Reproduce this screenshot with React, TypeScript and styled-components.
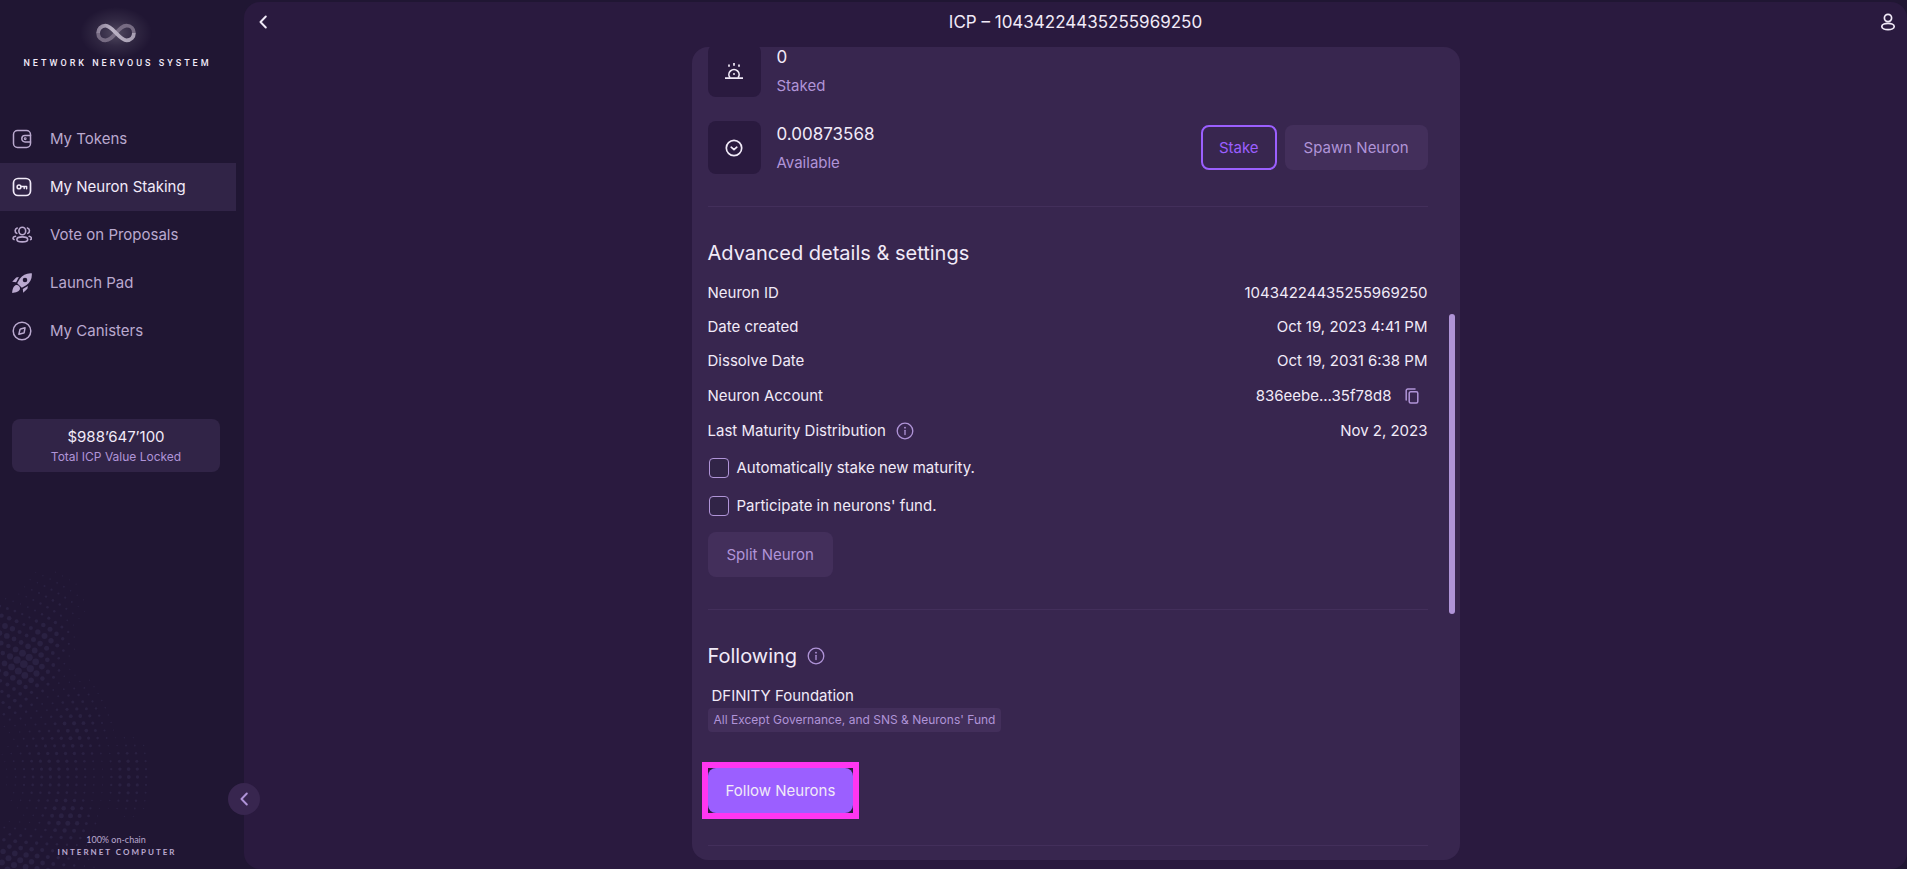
import React from "react";
import styled, { createGlobalStyle, css } from "styled-components";

const color = {
  page: "#201633",
  main: "#2a1a3f",
  card: "#38264f",
  raised: "#312447",
  control: "#432f5b",
  primary: "#9b5fff",
  lilac: "#b094d8",
  menu: "#baa9cf",
  text: "#f1eaf8",
  dots: "#2a2142",
};

const GlobalStyle = createGlobalStyle`
  *, *::before, *::after { box-sizing: border-box; }
  body {
    margin: 0;
    background: ${color.page};
    color: ${color.text};
    font-family: Inter, "Liberation Sans", sans-serif;
    font-size: 15px;
    line-height: 24px;
  }
  h1, h2, p, ul, dl, dd { margin: 0; padding: 0; font-weight: 400; }
  ul { list-style: none; }
  button { font: inherit; cursor: pointer; border: 0; padding: 0; }
  svg { display: block; }
`;

/* Shell */

const Shell = styled.div`
  display: grid;
  grid-template-columns: 244px minmax(0, 1fr);
  height: 100vh;
  overflow: hidden;
`;

const Sidebar = styled.aside`
  position: relative;
  display: flex;
  flex-direction: column;
  min-height: 0;
  padding-right: 8px;
`;

const Backdrop = styled.svg`
  position: absolute;
  left: 0;
  bottom: 0;
`;

const Brand = styled.div`
  display: flex;
  flex-direction: column;
  align-items: center;
  gap: 4px;
  padding: 12px 4px 46px 0;
`;

const BrandName = styled.p`
  font-family: Roboto, sans-serif;
  font-size: 9px;
  font-weight: 500;
  line-height: 12px;
  letter-spacing: 3px;
  margin-right: -3px;
  text-transform: uppercase;
`;

const MenuItem = styled.a<{ $active?: boolean }>`
  display: flex;
  align-items: center;
  gap: 18px;
  height: 48px;
  padding-left: 12px;
  color: ${color.menu};
  text-decoration: none;
  ${(p) =>
    p.$active &&
    css`
      background: ${color.raised};
      color: ${color.text};
    `}
`;

const ValueLocked = styled.div`
  margin: 64px 16px 0 12px;
  padding: 6px 8px 7px;
  border-radius: 8px;
  background: ${color.raised};
  text-align: center;
`;

const LockedLabel = styled.p`
  color: ${color.lilac};
  font-size: 12px;
  line-height: 16px;
`;

const OnChain = styled.a`
  position: relative;
  display: block;
  margin-top: auto;
  padding: 0 4px 11px 0;
  color: ${color.menu};
  font-family: Lato, sans-serif;
  font-size: 9px;
  line-height: 12px;
  text-align: center;
  text-decoration: none;
`;

const OnChainName = styled.strong`
  display: block;
  margin-right: -2px;
  font-size: 8px;
  font-weight: 700;
  letter-spacing: 2px;
  text-transform: uppercase;
`;

const CollapseButton = styled.button`
  position: absolute;
  z-index: 1;
  right: -16px;
  bottom: 54px;
  display: grid;
  place-items: center;
  width: 32px;
  height: 32px;
  border-radius: 50%;
  background: ${color.card};
  color: ${color.lilac};
`;

/* Main */

const Main = styled.main`
  display: flex;
  flex-direction: column;
  min-height: 0;
  margin-top: 2px;
  padding-bottom: 9px;
  border-radius: 16px;
  background: ${color.main};
`;

const Header = styled.header`
  display: grid;
  grid-template-columns: 32px 1fr 32px;
  align-items: center;
  height: 45px;
  padding: 0 3px 5px;
`;

const Title = styled.h1`
  font-size: 17px;
  text-align: center;
`;

const IconButton = styled.button`
  display: grid;
  place-items: center;
  width: 32px;
  height: 24px;
  background: none;
  color: inherit;
`;

const Card = styled.section`
  position: relative;
  flex: 1;
  min-height: 0;
  width: 768px;
  max-width: 100%;
  margin: 0 auto;
  padding: 0 32px 0 16px;
  border-radius: 16px;
  background: ${color.card};
  overflow: hidden;
`;

const ScrollThumb = styled.span`
  position: absolute;
  top: 267px;
  right: 5px;
  width: 6px;
  height: 300px;
  border-radius: 3px;
  background: ${color.lilac};
`;

const Section = styled.section<{ $scrolled?: boolean }>`
  margin-top: ${(p) => (p.$scrolled ? "-3px" : "32px")};
  padding-bottom: 32px;
  border-bottom: 1px solid ${color.control};
`;

const SectionTitle = styled.h2`
  display: flex;
  align-items: center;
  gap: 10px;
  margin-bottom: 14px;
  font-size: 20px;
  line-height: 28px;
`;

const Stats = styled.div`
  display: flex;
  flex-direction: column;
  gap: 24px;
`;

const Stat = styled.div`
  display: flex;
  align-items: flex-start;
  gap: 16px;
  height: 53px;
`;

const StatIcon = styled.span`
  display: grid;
  place-items: center;
  width: 53px;
  height: 53px;
  border-radius: 8px;
  background: ${color.main};
`;

const StatText = styled.div`
  flex: 1;
`;

const StatValue = styled.p`
  margin-bottom: 4px;
  font-size: 17px;
  line-height: 26px;
`;

const StatLabel = styled.p`
  color: ${color.lilac};
`;

const StatActions = styled.div`
  display: flex;
  gap: 8px;
  align-self: center;
`;

const Button = styled.button<{ $kind: "primary" | "outline" | "secondary" }>`
  height: 45px;
  border-radius: 8px;
  ${(p) =>
    ({
      primary: css`
        padding: 0 18px;
        background: ${color.primary};
        color: ${color.text};
      `,
      outline: css`
        padding: 0 16px;
        border: 2px solid ${color.primary};
        background: none;
        color: ${color.primary};
      `,
      secondary: css`
        padding: 0 19px;
        background: ${color.control};
        color: ${color.lilac};
      `,
    })[p.$kind]}
`;

const Details = styled.dl`
  display: flex;
  flex-direction: column;
  gap: 10px;
`;

const Detail = styled.div`
  display: flex;
  justify-content: space-between;
`;

const DetailName = styled.dt`
  display: flex;
  align-items: center;
  gap: 10px;
`;

const DetailValue = styled.dd`
  display: flex;
  align-items: center;
  gap: 4px;
`;

const CopyButton = styled(IconButton)`
  height: 26px;
  color: ${color.lilac};
`;

const InfoButton = styled(IconButton)`
  width: 18px;
  height: 20px;
  color: ${color.lilac};
`;

const Options = styled.div`
  display: flex;
  flex-direction: column;
  gap: 10px;
  margin: 11px 0 12px;
`;

const Option = styled.label`
  display: flex;
  align-items: center;
  gap: 8px;
  height: 28px;
  padding-left: 1px;
`;

const Checkbox = styled.input`
  appearance: none;
  width: 20px;
  height: 20px;
  margin: 0;
  border: 1px solid ${color.lilac};
  border-radius: 4px;
  background: ${color.raised};
  &:checked {
    background: ${color.primary};
  }
`;

const Followee = styled.p`
  padding-left: 4px;
`;

const Topic = styled.span`
  display: inline-block;
  padding: 0 6px;
  border-radius: 4px;
  background: ${color.control};
  color: ${color.lilac};
  font-size: 12px;
`;

const Topics = styled.div`
  display: flex;
`;

const Highlight = styled.div`
  width: fit-content;
  margin: 30px -6px -6px;
  border: 6px solid #ff36f1;
  background: #2c1a3e;
`;

/* Icons */

const stroke = {
  fill: "none",
  stroke: "currentColor",
  strokeWidth: 1.5,
  strokeLinecap: "round" as const,
  strokeLinejoin: "round" as const,
  "aria-hidden": true,
};

const WalletIcon = () => (
  <svg width="20" height="20" viewBox="0 0 20 20" {...stroke}>
    <rect x="1.5" y="1.5" width="17" height="17" rx="4" />
    <path d="M18.5 6.5h-5.500a3.200 3.200 0 0 0 0 6.400h5.500" />
    <circle cx="13.200" cy="9.700" r="0.900" strokeWidth="1.100" />
  </svg>
);

const KeyIcon = () => (
  <svg width="20" height="20" viewBox="0 0 20 20" {...stroke} strokeWidth={1.7}>
    <rect x="1.500" y="1.500" width="17" height="17" rx="4.500" />
    <circle cx="7" cy="9.900" r="1.900" strokeWidth="1.500" />
    <path d="M9 9.600h5.600v2.200M12.200 9.800v1.600" strokeWidth="1.500" />
  </svg>
);

const VoteIcon = () => (
  <svg width="20" height="20" viewBox="0 0 20 20" {...stroke} strokeWidth={1.6}>
    <ellipse cx="10.300" cy="6" rx="3.400" ry="3.700" />
    <ellipse cx="10.300" cy="14.400" rx="5.400" ry="2.500" />
    <path d="M5.200 3a2.900 2.900 0 0 0-.4 5.400M15.400 3a2.900 2.900 0 0 1 .4 5.400" />
    <path d="M3.400 11.300C2 11.700 1 12.400 1 13.300c0 .6.400 1.100 1 1.300M17.200 11.300c1.400.4 2.300 1.100 2.300 2 0 .6-.3 1.100-.9 1.300" />
  </svg>
);

const RocketIcon = () => (
  <svg width="20" height="20" viewBox="0 0 20 20" fill="currentColor" aria-hidden>
    <path
      fillRule="evenodd"
      d="M19.800.2C14.600-.2 10.600 1.900 7.800 5.800L5.200 10.200l4.600 4.600 4.400-2.600C18.300 9.400 20.300 5.400 19.800.2ZM13 4.700a2.300 2.300 0 1 1 0 4.600 2.300 2.300 0 0 1 0-4.600Z"
    />
    <path d="M6.900 4.100 4.200 4.600.2 8.800l3.900.4 2.800-5.100ZM15.900 13.100l-.5 2.700-4.200 4-.4-3.900 5.100-2.800Z" />
    <path d="M4.300 12c1.900-.3 4 1.700 3.700 3.700-.4 2.700-4.200 4-7.800 4.200C.3 16.300 1.600 12.400 4.300 12Z" />
  </svg>
);

const CompassIcon = () => (
  <svg width="20" height="20" viewBox="0 0 20 20" {...stroke}>
    <circle cx="10" cy="10" r="8.800" />
    <path d="M13 6.800 12.200 11.400c-.1.300-.3.500-.6.600L6.900 13.200l1.100-4.700c.1-.3.300-.5.600-.6L13 6.800Z" />
  </svg>
);

const ChevronLeft = () => (
  <svg width="8" height="14" viewBox="0 0 8 14" {...stroke} strokeWidth={1.9}>
    <path d="M6.800 1.500 1.500 7l5.300 5.500" />
  </svg>
);

const UserIcon = () => (
  <svg width="16" height="18" viewBox="0 0 16 18" {...stroke} strokeWidth={1.7}>
    <circle cx="8" cy="5" r="3.600" />
    <ellipse cx="8" cy="13.500" rx="6.200" ry="3.200" />
  </svg>
);

const StakedIcon = () => (
  <svg width="18" height="18" viewBox="0 0 18 18" {...stroke} strokeLinecap="butt">
    <path d="M0 16.200h18" strokeWidth="1.800" />
    <path d="M5 15.800a5.100 5.100 0 1 1 8 0" strokeWidth="1.700" />
    <path d="M9 1v2.800M4 2.500v2.200M14 2.500v2.200" strokeWidth="1.700" />
    <circle cx="9" cy="12" r="1" fill="currentColor" stroke="none" />
  </svg>
);

const AvailableIcon = () => (
  <svg width="18" height="18" viewBox="0 0 18 18" {...stroke} strokeWidth={1.7}>
    <circle cx="9" cy="9" r="7.700" />
    <path d="M6.200 8.200 9 10.700l2.800-2.500" />
  </svg>
);

const InfoIcon = () => (
  <svg width="18" height="18" viewBox="0 0 18 18" {...stroke} strokeWidth={1.3}>
    <circle cx="9" cy="9" r="7.800" />
    <path d="M9 8.300v4.200" />
    <circle cx="9" cy="5.700" r=".9" fill="currentColor" stroke="none" />
  </svg>
);

const CopyIcon = () => (
  <svg width="14" height="16" viewBox="0 0 14 16" {...stroke}>
    <rect x="4.200" y="3.800" width="8.600" height="11.200" rx="1.500" />
    <path d="M1.200 12V2.600c0-.9.7-1.600 1.600-1.600h7.200" />
  </svg>
);

const Logo = () => (
  <svg width="80" height="41" viewBox="0 0 80 41" fill="none" aria-hidden overflow="visible">
    <defs>
      <radialGradient id="glow">
        <stop offset="0" stopColor="#fff" stopOpacity=".22" />
        <stop offset=".5" stopColor="#fff" stopOpacity=".08" />
        <stop offset="1" stopColor="#fff" stopOpacity="0" />
      </radialGradient>
      <linearGradient id="strand" x1="0" x2="1">
        <stop offset="0" stopColor="#8d8299" />
        <stop offset=".4" stopColor="#bcb4c6" />
        <stop offset="1" stopColor="#a79eb2" />
      </linearGradient>
    </defs>
    <ellipse cx="40" cy="21" rx="36" ry="26" fill="url(#glow)" />
    <g strokeWidth="3.800">
      <path
        d="M40 21c-3.600 4-6.400 7.300-10.600 7.300-4.300 0-7.300-3.200-7.300-7.300M40 21c3.600-4 6.400-7.300 10.600-7.300 4.300 0 7.300 3.200 7.300 7.300"
        stroke="#776c83"
      />
      <path
        d="M22.100 21c0-4.100 3-7.300 7.300-7.300C36.600 13.700 43.400 28.300 50.600 28.300c4.300 0 7.300-3.200 7.300-7.300"
        stroke="url(#strand)"
      />
    </g>
  </svg>
);

/* Halftone backdrop: dots on concentric rings, sized by how close they are to each blob. */

const BLOBS = [
  { x: 24, y: 104, sx: 24, sy: 22, size: 3.9 },
  { x: 44, y: 78, sx: 18, sy: 18, size: 3 },
  { x: 4, y: 72, sx: 18, sy: 20, size: 3 },
  { x: 50, y: 45, sx: 26, sy: 26, size: 1.3 },
  { x: 14, y: 135, sx: 24, sy: 22, size: 2 },
  { x: 75, y: 170, sx: 24, sy: 34, size: 2.1 },
  { x: 128, y: 216, sx: 18, sy: 26, size: 2 },
  { x: 55, y: 205, sx: 34, sy: 44, size: 1.8 },
  { x: 66, y: 258, sx: 20, sy: 22, size: 2.6 },
  { x: 10, y: 304, sx: 46, sy: 24, size: 3.1 },
];

const backdropDots = (() => {
  const dots: { x: number; y: number; r: number }[] = [];
  const cx = -49;
  const cy = 217;
  for (let ring = 56; ring < 260; ring += 8.7) {
    const count = Math.round((2 * Math.PI * ring) / 7.9);
    for (let i = 0; i < count; i++) {
      const angle = (2 * Math.PI * i) / count;
      const x = cx + ring * Math.cos(angle);
      const y = cy + ring * Math.sin(angle);
      if (x < -4 || x > 150 || y < 0 || y > 312) continue;
      const r = Math.max(
        ...BLOBS.map((b) => b.size * Math.exp(-(((x - b.x) / b.sx) ** 2 + ((y - b.y) / b.sy) ** 2) / 2)),
      );
      if (r > 0.5) dots.push({ x, y, r });
    }
  }
  return dots;
})();

const HalftoneBackdrop = () => (
  <Backdrop width="244" height="309" viewBox="0 0 244 309" fill={color.dots} aria-hidden>
    {backdropDots.map((d, i) => (
      <circle key={i} cx={d.x.toFixed(1)} cy={d.y.toFixed(1)} r={d.r.toFixed(1)} />
    ))}
  </Backdrop>
);

/* Content */

const MENU = [
  { label: "My Tokens", Icon: WalletIcon },
  { label: "My Neuron Staking", Icon: KeyIcon, active: true },
  { label: "Vote on Proposals", Icon: VoteIcon },
  { label: "Launch Pad", Icon: RocketIcon },
  { label: "My Canisters", Icon: CompassIcon },
];

const DETAILS = [
  { name: "Neuron ID", value: "10434224435255969250" },
  { name: "Date created", value: "Oct 19, 2023 4:41 PM" },
  { name: "Dissolve Date", value: "Oct 19, 2031 6:38 PM" },
  { name: "Neuron Account", value: "836eebe...35f78d8", copy: true },
  { name: "Last Maturity Distribution", value: "Nov 2, 2023", info: true },
];

const OPTIONS = ["Automatically stake new maturity.", "Participate in neurons' fund."];

export default function App() {
  return (
    <>
      <GlobalStyle />
      <Shell>
        <Sidebar>
          <HalftoneBackdrop />
          <Brand>
            <Logo />
            <BrandName>Network Nervous System</BrandName>
          </Brand>
          <nav>
            {MENU.map(({ label, Icon, active }) => (
              <MenuItem key={label} href="#" $active={active} aria-current={active ? "page" : undefined}>
                <Icon />
                {label}
              </MenuItem>
            ))}
          </nav>
          <ValueLocked>
            <p>$988’647’100</p>
            <LockedLabel>Total ICP Value Locked</LockedLabel>
          </ValueLocked>
          <OnChain href="#">
            100% on-chain
            <OnChainName>Internet Computer</OnChainName>
          </OnChain>
          <CollapseButton aria-label="Collapse menu">
            <ChevronLeft />
          </CollapseButton>
        </Sidebar>

        <Main>
          <Header>
            <IconButton aria-label="Back">
              <ChevronLeft />
            </IconButton>
            <Title>ICP – 10434224435255969250</Title>
            <IconButton aria-label="Account">
              <UserIcon />
            </IconButton>
          </Header>

          <Card>
            <Section $scrolled>
              <Stats>
                <Stat>
                  <StatIcon>
                    <StakedIcon />
                  </StatIcon>
                  <StatText>
                    <StatValue>0</StatValue>
                    <StatLabel>Staked</StatLabel>
                  </StatText>
                </Stat>
                <Stat>
                  <StatIcon>
                    <AvailableIcon />
                  </StatIcon>
                  <StatText>
                    <StatValue>0.00873568</StatValue>
                    <StatLabel>Available</StatLabel>
                  </StatText>
                  <StatActions>
                    <Button $kind="outline">Stake</Button>
                    <Button $kind="secondary">Spawn Neuron</Button>
                  </StatActions>
                </Stat>
              </Stats>
            </Section>

            <Section>
              <SectionTitle>Advanced details &amp; settings</SectionTitle>
              <Details>
                {DETAILS.map(({ name, value, copy, info }) => (
                  <Detail key={name}>
                    <DetailName>
                      {name}
                      {info && (
                        <InfoButton aria-label="About maturity distribution">
                          <InfoIcon />
                        </InfoButton>
                      )}
                    </DetailName>
                    <DetailValue>
                      {value}
                      {copy && (
                        <CopyButton aria-label="Copy account">
                          <CopyIcon />
                        </CopyButton>
                      )}
                    </DetailValue>
                  </Detail>
                ))}
              </Details>
              <Options>
                {OPTIONS.map((label) => (
                  <Option key={label}>
                    <Checkbox type="checkbox" />
                    {label}
                  </Option>
                ))}
              </Options>
              <Button $kind="secondary">Split Neuron</Button>
            </Section>

            <Section>
              <SectionTitle>
                Following
                <InfoButton aria-label="About following">
                  <InfoIcon />
                </InfoButton>
              </SectionTitle>
              <Followee>DFINITY Foundation</Followee>
              <Topics>
                <Topic>All Except Governance, and SNS &amp; Neurons' Fund</Topic>
              </Topics>
              <Highlight>
                <Button $kind="primary">Follow Neurons</Button>
              </Highlight>
            </Section>
            <ScrollThumb />
          </Card>
        </Main>
      </Shell>
    </>
  );
}
